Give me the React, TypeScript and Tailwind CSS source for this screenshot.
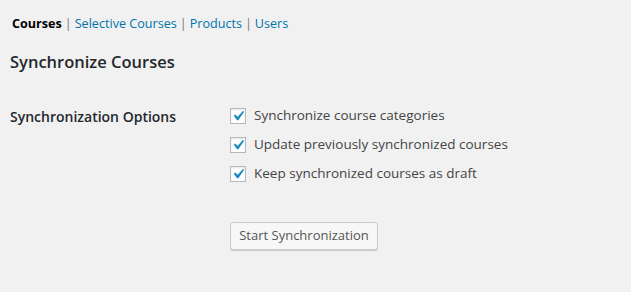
import React from "react";

function Check() {
  return (
    <span className="w-4 h-4 border border-[#b4b9be] bg-white flex items-center justify-center shrink-0 shadow-[inset_0_1px_2px_rgba(0,0,0,0.1)] overflow-visible">
      <svg width="20" height="20" viewBox="0 0 20 20" className="-m-[3px] shrink-0">
        <path d="M14.83 4.89l1.34.94-5.81 8.38H9.02L5.78 9.67l1.34-1.25 2.57 2.4z" fill="#1e8cbe" />
      </svg>
    </span>
  );
}

export default function App() {
  const opts = [
    "Synchronize course categories",
    "Update previously synchronized courses",
    "Keep synchronized courses as draft",
  ];
  return (
    <div className="w-[631px] h-[292px] bg-[#f1f1f1] text-[#444] text-[13px] font-['Open_Sans',sans-serif] overflow-hidden">
      <div className="pt-[14px] pl-[12px] flex items-center gap-[2px] text-[12.6px] leading-[20px]">
        <span className="font-bold text-black">Courses</span>
        <span className="text-[#777] px-[1px]">|</span>
        <span className="text-[#0073aa]">Selective Courses</span>
        <span className="text-[#777] px-[1px]">|</span>
        <span className="text-[#0073aa]">Products</span>
        <span className="text-[#777] px-[1px]">|</span>
        <span className="text-[#0073aa]">Users</span>
      </div>
      <h2 className="mt-[17px] pl-[10px] text-[16.5px] font-semibold text-[#23282d] leading-[22px]">
        Synchronize Courses
      </h2>
      <div className="mt-[33px] flex pl-[10px]">
        <div className="w-[220px] font-semibold text-[14px] text-[#23282d] leading-[20px] pt-[1px]">
          Synchronization Options
        </div>
        <div className="flex flex-col -mt-[5px]">
          {opts.map((o) => (
            <div key={o} className="flex items-center gap-[8px] h-[29px]">
              <Check />
              <span className="text-[#444] text-[13.5px]">{o}</span>
            </div>
          ))}
          <button className="mt-[34px] w-[148px] h-[28px] border border-[#ccc] bg-[#f7f7f7] rounded-[3px] text-[#555] text-[13px] shadow-[0_1px_0_#ccc]">
            Start Synchronization
          </button>
        </div>
      </div>
    </div>
  );
}
